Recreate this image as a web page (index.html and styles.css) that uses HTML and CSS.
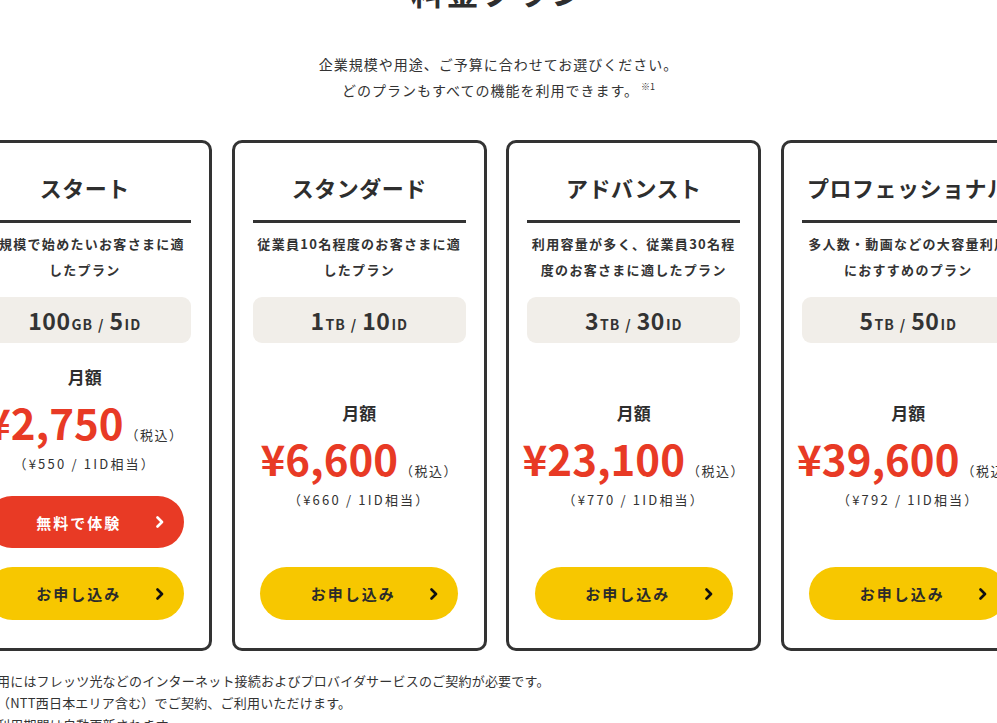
FILE: index.html
```html
<!DOCTYPE html>
<html lang="ja">
<head>
<meta charset="utf-8">
<title>料金プラン</title>
<link rel="stylesheet" href="styles.css">
</head>
<body>
<section class="plans">
  <h2 class="plans-title">料金プラン</h2>
  <p class="plans-lead">企業規模や用途、ご予算に合わせてお選びください。<br>どのプランもすべての機能を利用できます。<sup class="note-mark">※1</sup></p>

  <div class="plan-row">
    <div class="card">
      <h3 class="card-title">スタート</h3>
      <p class="card-desc">小規模で始めたいお客さまに適<br>したプラン</p>
      <div class="spec"><span class="num">100</span><span class="unit">GB</span><span class="slash">/</span><span class="num">5</span><span class="unit">ID</span></div>
      <div class="price-area">
        <div class="price-label">月額</div>
        <div class="price"><span class="amount">¥2,750</span><span class="tax">（税込）</span></div>
        <div class="per">（¥550 / 1ID相当）</div>
      </div>
      <div class="actions">
        <a class="btn btn-red" href="#"><span class="btn-text">無料で体験</span><svg class="chev" viewBox="0 0 8 12" width="8" height="12"><path d="M1.5 1.5 L6 6 L1.5 10.5" fill="none" stroke="currentColor" stroke-width="2.6" stroke-linecap="round" stroke-linejoin="round"/></svg></a>
        <a class="btn btn-yellow" href="#"><span class="btn-text">お申し込み</span><svg class="chev" viewBox="0 0 8 12" width="8" height="12"><path d="M1.5 1.5 L6 6 L1.5 10.5" fill="none" stroke="currentColor" stroke-width="2.6" stroke-linecap="round" stroke-linejoin="round"/></svg></a>
      </div>
    </div>

    <div class="card">
      <h3 class="card-title">スタンダード</h3>
      <p class="card-desc">従業員10名程度のお客さまに適<br>したプラン</p>
      <div class="spec"><span class="num">1</span><span class="unit">TB</span><span class="slash">/</span><span class="num">10</span><span class="unit">ID</span></div>
      <div class="price-area">
        <div class="price-label">月額</div>
        <div class="price"><span class="amount">¥6,600</span><span class="tax">（税込）</span></div>
        <div class="per">（¥660 / 1ID相当）</div>
      </div>
      <div class="actions">
        <a class="btn btn-yellow" href="#"><span class="btn-text">お申し込み</span><svg class="chev" viewBox="0 0 8 12" width="8" height="12"><path d="M1.5 1.5 L6 6 L1.5 10.5" fill="none" stroke="currentColor" stroke-width="2.6" stroke-linecap="round" stroke-linejoin="round"/></svg></a>
      </div>
    </div>

    <div class="card">
      <h3 class="card-title">アドバンスト</h3>
      <p class="card-desc">利用容量が多く、従業員30名程<br>度のお客さまに適したプラン</p>
      <div class="spec"><span class="num">3</span><span class="unit">TB</span><span class="slash">/</span><span class="num">30</span><span class="unit">ID</span></div>
      <div class="price-area">
        <div class="price-label">月額</div>
        <div class="price"><span class="amount">¥23,100</span><span class="tax">（税込）</span></div>
        <div class="per">（¥770 / 1ID相当）</div>
      </div>
      <div class="actions">
        <a class="btn btn-yellow" href="#"><span class="btn-text">お申し込み</span><svg class="chev" viewBox="0 0 8 12" width="8" height="12"><path d="M1.5 1.5 L6 6 L1.5 10.5" fill="none" stroke="currentColor" stroke-width="2.6" stroke-linecap="round" stroke-linejoin="round"/></svg></a>
      </div>
    </div>

    <div class="card">
      <h3 class="card-title">プロフェッショナル</h3>
      <p class="card-desc">多人数・動画などの大容量利用<br>におすすめのプラン</p>
      <div class="spec"><span class="num">5</span><span class="unit">TB</span><span class="slash">/</span><span class="num">50</span><span class="unit">ID</span></div>
      <div class="price-area">
        <div class="price-label">月額</div>
        <div class="price"><span class="amount">¥39,600</span><span class="tax">（税込）</span></div>
        <div class="per">（¥792 / 1ID相当）</div>
      </div>
      <div class="actions">
        <a class="btn btn-yellow" href="#"><span class="btn-text">お申し込み</span><svg class="chev" viewBox="0 0 8 12" width="8" height="12"><path d="M1.5 1.5 L6 6 L1.5 10.5" fill="none" stroke="currentColor" stroke-width="2.6" stroke-linecap="round" stroke-linejoin="round"/></svg></a>
      </div>
    </div>
  </div>

  <div class="notes">
    <p>用にはフレッツ光などのインターネット接続およびプロバイダサービスのご契約が必要です。</p>
    <p>（NTT西日本エリア含む）でご契約、ご利用いただけます。</p>
    <p>利用期間は自動更新されます。</p>
  </div>
</section>
</body>
</html>
```
FILE: styles.css
```css
* { box-sizing: border-box; }
html, body {
  margin: 0;
  padding: 0;
  background: #ffffff;
  overflow: hidden;
}
body {
  font-family: "Noto Sans CJK JP", "Noto Sans", sans-serif;
  color: #333333;
}
.plans {
  display: flex;
  flex-direction: column;
  align-items: center;
}
.plans-title {
  margin: -33px 0 0;
  font-size: 33px;
  line-height: 48px;
  font-weight: 700;
  letter-spacing: 2px;
  color: #2e2e2e;
}
.plans-lead {
  margin: 36px 0 0;
  font-size: 14px;
  line-height: 26px;
  letter-spacing: 1px;
  text-align: center;
  color: #333;
}
.note-mark {
  font-size: 9px;
  vertical-align: 6px;
  line-height: 0;
  letter-spacing: 0;
  margin-left: 2px;
}
.plan-row {
  width: 100%;
  display: flex;
  justify-content: center;
  gap: 19.5px;
  margin-top: 37px;
  padding-right: 4px;
  overflow: hidden;
}
.card {
  flex: 0 0 255px;
  width: 255px;
  min-width: 0;
  border: 3px solid #333333;
  border-radius: 10px;
  padding: 28px 18px 28px;
  display: flex;
  flex-direction: column;
  background: #fff;
}
.card-title {
  margin: 0;
  font-size: 22px;
  line-height: 32px;
  font-weight: 700;
  letter-spacing: 0.5px;
  text-align: center;
  white-space: nowrap;
  padding-bottom: 17px;
  border-bottom: 3px solid #333333;
  color: #2e2e2e;
}
.card-desc {
  margin: 8px 0 0;
  font-size: 13px;
  line-height: 26px;
  font-weight: 700;
  letter-spacing: 1.3px;
  text-align: center;
  white-space: nowrap;
  color: #333;
}
.spec {
  margin-top: 14px;
  height: 46px;
  border-radius: 9px;
  background: #f1eee9;
  display: flex;
  align-items: baseline;
  justify-content: center;
  padding-top: 7px;
  color: #333;
  font-weight: 700;
  white-space: nowrap;
}
.spec .num {
  font-size: 23px;
  line-height: 32px;
  letter-spacing: 0.5px;
}
.spec .unit {
  font-size: 14px;
  letter-spacing: 1px;
  margin-left: 1px;
}
.spec .slash {
  font-size: 14px;
  margin: 0 6px 0 5px;
}
.price-area {
  flex: 1;
  display: flex;
  flex-direction: column;
  align-items: center;
  justify-content: center;
  padding: 22px 0;
}
.price-label {
  font-size: 17px;
  line-height: 24px;
  font-weight: 700;
  color: #2e2e2e;
}
.price {
  margin-top: 8px;
  display: flex;
  align-items: baseline;
  justify-content: center;
  white-space: nowrap;
}
.amount {
  font-size: 42px;
  line-height: 50px;
  font-weight: 700;
  color: #e83a25;
  letter-spacing: 0;
}
.tax {
  font-size: 13px;
  margin-left: 2px;
  letter-spacing: 1.5px;
  color: #333;
}
.per {
  margin-top: 7px;
  font-size: 13px;
  line-height: 20px;
  letter-spacing: 2.2px;
  color: #333;
  white-space: nowrap;
}
.actions {
  display: flex;
  flex-direction: column;
  align-items: center;
  gap: 19px;
}
.btn {
  width: 198px;
  height: 53px;
  border-radius: 27px;
  display: flex;
  align-items: center;
  padding: 0 20px 0 16px;
  text-decoration: none;
  font-size: 15px;
  font-weight: 700;
  letter-spacing: 2px;
}
.btn-text {
  flex: 1;
  text-align: center;
}
.btn-red {
  height: 52px;
  background: #e83a25;
  color: #ffffff;
}
.btn-yellow {
  background: #f7c700;
  color: #2b2b2b;
}
.btn-yellow .chev { color: #111; }
.chev {
  display: block;
  flex: 0 0 8px;
}
.notes {
  align-self: flex-start;
  margin: 19px 0 0 -3px;
  font-size: 13px;
  line-height: 22px;
  letter-spacing: 0.2px;
  color: #333;
}
.notes p {
  margin: 0;
  white-space: nowrap;
}
```
